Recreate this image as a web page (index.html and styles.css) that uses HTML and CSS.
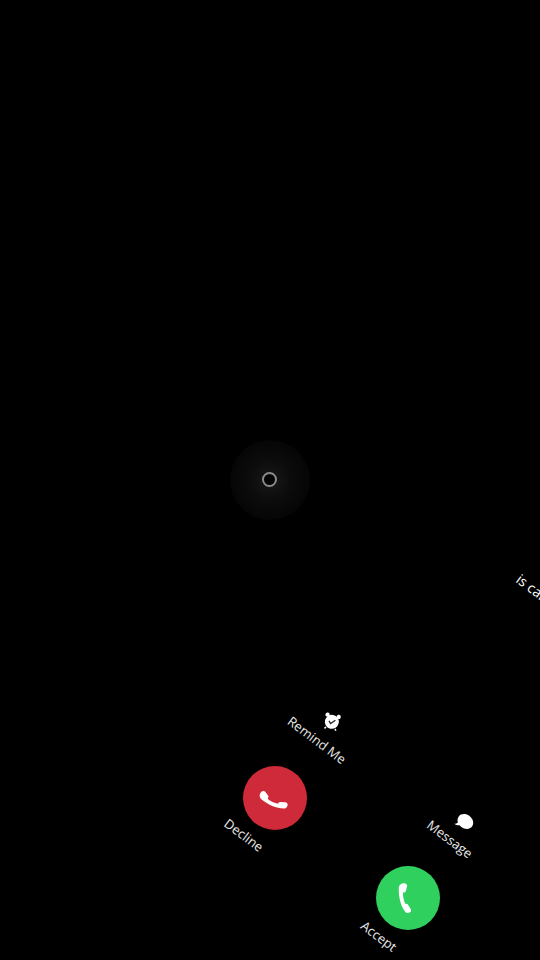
FILE: index.html
```html
<!DOCTYPE html>
<html lang="en">
<head>
<meta charset="utf-8">
<title>Incoming call</title>
<link rel="stylesheet" href="styles.css">
</head>
<body>
<main class="screen">
  <div class="glow"></div>
  <div class="ring"></div>
  <span class="label calling">is calling</span>

  <svg class="icon clock" viewBox="0 0 24 24" aria-hidden="true">
    <circle cx="12" cy="13" r="8.4" fill="#fff"/>
    <circle cx="5.2" cy="5.6" r="2.6" fill="#fff"/>
    <circle cx="18.8" cy="5.6" r="2.6" fill="#fff"/>
    <path d="M6.5 20.5 5 22.5M17.5 20.5 19 22.5" stroke="#fff" stroke-width="1.8" fill="none"/>
    <path d="M8.4 12.6l2.6 2.8 4.8-5" stroke="#222" stroke-width="1.5" fill="none"/>
  </svg>
  <span class="label remind">Remind Me</span>

  <svg class="icon bubble" viewBox="0 0 24 24" aria-hidden="true">
    <path d="M12 3c5.6 0 10 3.6 10 8.2s-4.4 8.2-10 8.2c-1 0-2-.1-2.900-.3C7.600 20.600 5.200 21.400 3 21.300c1.300-1 2.200-2.300 2.500-3.700C3.400 16.100 2 13.800 2 11.200 2 6.600 6.400 3 12 3z" fill="#fff"/>
  </svg>
  <span class="label message">Message</span>

  <div class="call-btn decline">
    <svg class="handset" viewBox="0 0 24 24" aria-hidden="true">
      <path d="M9.500 1.600C7.500 1.400 5.600 2.800 5.500 4.800 5.300 11.500 6.800 17.800 10.300 22c.9 1 3.200.5 3.700-.5.4-.8.100-1.500-.4-2.300l-1.700-2.600c-.4-.6-1.200-.6-1.700-.3-1.400-2.500-1.800-5.800-1.700-8.200.8 0 1.700-.3 2-1.100l.9-3.400c.2-1-.8-1.900-2.200-2z" fill="#fff"/>
    </svg>
  </div>
  <span class="label decline-label">Decline</span>

  <div class="call-btn accept">
    <svg class="handset" viewBox="0 0 24 24" aria-hidden="true">
      <path d="M9.500 1.600C7.500 1.400 5.600 2.800 5.500 4.800 5.300 11.500 6.800 17.800 10.300 22c.9 1 3.200.5 3.700-.5.4-.8.100-1.500-.4-2.300l-1.700-2.600c-.4-.6-1.200-.6-1.700-.3-1.400-2.500-1.800-5.800-1.700-8.200.8 0 1.700-.3 2-1.100l.9-3.400c.2-1-.8-1.900-2.200-2z" fill="#fff"/>
    </svg>
  </div>
  <span class="label accept-label">Accept</span>
</main>
</body>
</html>
```
FILE: styles.css
```css
html, body {
  margin: 0;
  padding: 0;
  background: #000;
}

.screen {
  position: relative;
  width: 540px;
  height: 960px;
  overflow: hidden;
  background: #000;
  font-family: "Open Sans", "Noto Sans", sans-serif;
}

.glow {
  position: absolute;
  left: 230px;
  top: 440px;
  width: 80px;
  height: 80px;
  border-radius: 50%;
  background: radial-gradient(circle, #1a1a1a 0%, #0c0c0c 35%, #000 100%);
}

.ring {
  position: absolute;
  left: 262px;
  top: 472px;
  width: 11px;
  height: 11px;
  border: 2.5px solid #8a8a8a;
  border-radius: 50%;
  background: #050505;
}

.label {
  position: absolute;
  color: #e8e8e8;
  font-size: 13px;
  line-height: 16px;
  white-space: nowrap;
  transform: translate(-50%, -50%) rotate(37deg);
}

.calling  { left: 540px; top: 594px; font-size: 14px; color: #fff; }
.remind   { left: 317px; top: 740px; }
.decline-label { left: 244px; top: 835px; }
.message  { left: 450px; top: 839px; }
.accept-label  { left: 379px; top: 936px; }

.icon {
  position: absolute;
  display: block;
}

.clock {
  left: 322px;
  top: 711px;
  width: 20px;
  height: 20px;
  transform: rotate(12deg);
}

.bubble {
  left: 455px;
  top: 812px;
  width: 20px;
  height: 20px;
  transform: rotate(37deg);
}

.call-btn {
  position: absolute;
  width: 64px;
  height: 64px;
  border-radius: 50%;
  display: flex;
  align-items: center;
  justify-content: center;
}

.decline {
  left: 243px;
  top: 766px;
  background: #cf2a39;
}

.decline .handset {
  transform: rotate(-53deg);
}

.accept {
  left: 376px;
  top: 866px;
  background: #30d05f;
}

.handset {
  display: block;
  width: 34px;
  height: 34px;
}
```
